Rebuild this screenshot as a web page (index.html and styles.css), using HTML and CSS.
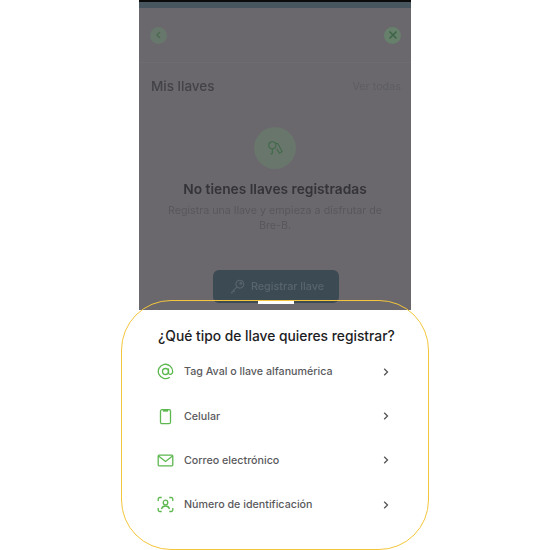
FILE: index.html
```html
<!DOCTYPE html>
<html lang="es">
<head>
    <meta charset="UTF-8">
    <title>Mis llaves</title>
    <link rel="stylesheet" href="styles.css">
</head>
<body>
    <div class="frame">
        <div class="phone">
            <div class="status-black"></div>
            <div class="status-blue"></div>
            <div class="blurred">
                <div class="nav">
                    <div class="nav-btn nav-back">
                        <svg width="10" height="10" viewBox="0 0 10 10"><path d="M6 2 3 5l3 3" fill="none" stroke="#4a6a50" stroke-width="1.4"/></svg>
                    </div>
                    <div class="nav-btn nav-close">
                        <svg width="10" height="10" viewBox="0 0 10 10"><path d="M1.5 1.5l7 7M8.5 1.5l-7 7" fill="none" stroke="#3d6446" stroke-width="1.6"/></svg>
                    </div>
                </div>
                <div class="keys-head">
                    <div class="keys-title">Mis llaves</div>
                    <div class="keys-all">Ver todas</div>
                </div>
                <div class="empty">
                    <div class="empty-icon">
                        <svg width="18" height="16" viewBox="0 0 20 18" fill="none" stroke="#41694a" stroke-width="1.2">
                            <circle cx="7" cy="6" r="4"/>
                            <path d="M7 10v5l-2 1M11 4h2l5 9-3 2-3-5"/>
                        </svg>
                    </div>
                    <div class="empty-title">No tienes llaves registradas</div>
                    <div class="empty-text">Registra una llave y empieza a disfrutar de<br>Bre-B.</div>
                </div>
                <div class="register">
                    <svg width="15" height="15" viewBox="0 0 16 16" fill="none" stroke="#59656d" stroke-width="1.2">
                        <circle cx="10.500" cy="5.500" r="4.200"/>
                        <circle cx="11.500" cy="4.500" r="1"/>
                        <path d="M7.500 8.500 1.500 14.500M3.500 12.500l1.500 1.500M1.500 14.500l1 1"/>
                    </svg>
                    <span>Registrar llave</span>
                </div>
            </div>
        </div>

        <div class="sheet">
            <h1 class="sheet-title">¿Qué tipo de llave quieres registrar?</h1>
            <div class="option">
                <svg class="option-icon" width="17" height="17" viewBox="0 0 17 17" fill="none" stroke="#5cb84e" stroke-width="1.3">
                    <circle cx="8.500" cy="8.500" r="3"/>
                    <path d="M11.500 5.500v4.200c0 2.400 4.200 2.200 4.200-1.200a7.200 7.200 0 1 0-3 5.800"/>
                </svg>
                <span class="option-label">Tag Aval o llave alfanumérica</span>
                <svg class="chevron" width="6" height="8" viewBox="0 0 6 8"><path d="M1.200 .8 4.500 4 1.200 7.200" fill="none" stroke="#555" stroke-width="1.300"/></svg>
            </div>
            <div class="option">
                <svg class="option-icon" width="17" height="17" viewBox="0 0 17 17" fill="none" stroke="#5cb84e" stroke-width="1.3">
                    <rect x="3.500" y="1.700" width="10" height="14" rx="1.500"/>
                    <path d="M6.500 1.700h4v1.300h-4z"/>
                </svg>
                <span class="option-label">Celular</span>
                <svg class="chevron" width="6" height="8" viewBox="0 0 6 8"><path d="M1.200 .8 4.500 4 1.200 7.200" fill="none" stroke="#555" stroke-width="1.300"/></svg>
            </div>
            <div class="option">
                <svg class="option-icon" width="17" height="17" viewBox="0 0 17 17" fill="none" stroke="#5cb84e" stroke-width="1.3">
                    <rect x="1.200" y="3.200" width="14.600" height="10.600" rx="1"/>
                    <path d="M1.500 4l7 5.500L15.500 4"/>
                </svg>
                <span class="option-label">Correo electrónico</span>
                <svg class="chevron" width="6" height="8" viewBox="0 0 6 8"><path d="M1.200 .8 4.500 4 1.200 7.200" fill="none" stroke="#555" stroke-width="1.300"/></svg>
            </div>
            <div class="option">
                <svg class="option-icon" width="17" height="17" viewBox="0 0 17 17" fill="none" stroke="#5cb84e" stroke-width="1.3">
                    <path d="M1.200 5V3a1.500 1.500 0 0 1 1.500-1.500h2M12.300 1.500h2A1.500 1.500 0 0 1 15.800 3v2M15.800 12v2a1.500 1.500 0 0 1-1.500 1.500h-2M4.700 15.500h-2A1.500 1.500 0 0 1 1.200 14v-2"/>
                    <circle cx="8.500" cy="6.500" r="2.300"/>
                    <path d="M4.500 13c.5-2 2-3 4-3s3.500 1 4 3"/>
                </svg>
                <span class="option-label">Número de identificación</span>
                <svg class="chevron" width="6" height="8" viewBox="0 0 6 8"><path d="M1.200 .8 4.500 4 1.200 7.200" fill="none" stroke="#555" stroke-width="1.300"/></svg>
            </div>
        </div>

        <div class="ring"></div>
        <div class="handle"></div>
    </div>
</body>
</html>
```

FILE: styles.css
```css
html, body {
    margin: 0;
    background-color: #fff;
}
body {
    font-family: Inter, "Liberation Sans", sans-serif;
}
.frame {
    position: relative;
    width: 550px;
    height: 550px;
    overflow: hidden;
}
.phone {
    width: 272px;
    height: 310px;
    margin-left: 139px;
    background-color: #6a686d;
    overflow: hidden;
}
.status-black {
    height: 2px;
    background-color: #0b0b0c;
}
.status-blue {
    height: 6px;
    background-color: #47565f;
}
.blurred {
    filter: blur(0.7px);
}
.nav {
    display: flex;
    justify-content: space-between;
    align-items: center;
    height: 54px;
    padding: 0 10px 0 11px;
    border-bottom: 1px solid #6e6c71;
}
.nav-btn {
    display: flex;
    justify-content: center;
    align-items: center;
    width: 17px;
    height: 17px;
    border-radius: 50%;
}
.nav-back {
    background-color: #68776c;
}
.nav-close {
    background-color: #66806c;
}
.keys-head {
    display: flex;
    justify-content: space-between;
    align-items: center;
    padding: 14px 10px 0 12px;
    height: 18px;
}
.keys-title {
    font-size: 13.5px;
    font-weight: 500;
    color: #434247;
}
.keys-all {
    font-size: 10.8px;
    color: #5e5d62;
}
.empty {
    display: flex;
    flex-direction: column;
    align-items: center;
    margin-top: 32px;
}
.empty-icon {
    display: flex;
    justify-content: center;
    align-items: center;
    width: 42px;
    height: 42px;
    border-radius: 50%;
    background-color: #69766c;
}
.empty-title {
    margin-top: 11px;
    font-size: 13.75px;
    font-weight: 600;
    line-height: 18px;
    color: #343338;
}
.empty-text {
    margin-top: 5px;
    font-size: 10.7px;
    line-height: 15px;
    text-align: center;
    color: #58575c;
}
.register {
    display: flex;
    justify-content: center;
    align-items: center;
    gap: 6px;
    box-sizing: border-box;
    width: 126px;
    height: 33px;
    margin: 37px 0 0 74px;
    padding-left: 2px;
    border-radius: 6px;
    background-color: #3c4a54;
}
.register span {
    font-size: 10.8px;
    font-weight: 500;
    color: #59656d;
}
.sheet {
    padding: 16px 0 0 157px;
}
.sheet-title {
    margin: 0 0 3.5px 1px;
    font-size: 13.8px;
    line-height: 20px;
    font-weight: 500;
    color: #1d1d1f;
}
.option {
    display: flex;
    align-items: center;
    height: 44.4px;
    width: 232px;
}
.option-icon {
    flex: none;
}
.option-label {
    flex: 1;
    margin-left: 10px;
    font-size: 10.7px;
    font-weight: 500;
    color: #59595c;
}
.ring {
    position: absolute;
    left: 121px;
    top: 300px;
    width: 306px;
    height: 248px;
    border: 1px solid #f4c63c;
    border-radius: 50px;
}
.handle {
    position: absolute;
    left: 258px;
    top: 301px;
    width: 36px;
    height: 3px;
    background-color: #fff;
}
```
